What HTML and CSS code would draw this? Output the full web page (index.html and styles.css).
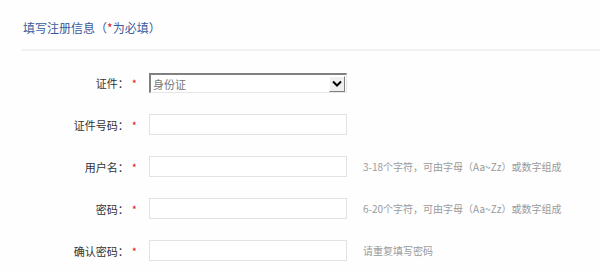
FILE: index.html
```html
<!DOCTYPE html>
<html lang="zh-CN">
<head>
<meta charset="utf-8">
<title>填写注册信息</title>
<link rel="stylesheet" href="styles.css">
</head>
<body>
<div class="header">
  <h2 class="title">填写注册信息（<span class="req">*</span>为必填）</h2>
</div>
<form class="form">
  <div class="row">
    <label class="label">证件：<span class="req">*</span></label>
    <div class="select">
      <span class="select-text">身份证</span>
      <span class="select-btn">
        <svg width="10" height="7" viewBox="0 0 10 7"><path d="M1 1.5 L5 5.5 L9 1.5" fill="none" stroke="#000" stroke-width="2"/></svg>
      </span>
    </div>
  </div>
  <div class="row">
    <label class="label">证件号码：<span class="req">*</span></label>
    <input class="input" type="text">
  </div>
  <div class="row">
    <label class="label">用户名：<span class="req">*</span></label>
    <input class="input" type="text">
    <span class="hint">3-18个字符，可由字母（Aa~Zz）或数字组成</span>
  </div>
  <div class="row">
    <label class="label">密码：<span class="req">*</span></label>
    <input class="input" type="password">
    <span class="hint">6-20个字符，可由字母（Aa~Zz）或数字组成</span>
  </div>
  <div class="row">
    <label class="label">确认密码：<span class="req">*</span></label>
    <input class="input" type="password">
    <span class="hint">请重复填写密码</span>
  </div>
</form>
</body>
</html>
```
FILE: styles.css
```css
html, body {
  margin: 0;
  padding: 0;
  background: #fefefe;
}
body {
  font-family: "Noto Sans CJK SC", "Noto Sans", "Liberation Sans", sans-serif;
  color: #333;
}
.header {
  margin-left: 21px;
  padding: 20px 0 13px 2px;
  border-bottom: 2px solid #f2f2f2;
}
.title {
  margin: 0;
  font-size: 12px;
  line-height: 16px;
  font-weight: normal;
  color: #3a5a9c;
}
.req {
  color: #e0202a;
}
.form {
  display: flex;
  flex-direction: column;
  gap: 21px;
  padding-top: 22px;
}
.row {
  display: flex;
  align-items: center;
}
.label {
  width: 137px;
  text-align: right;
  font-size: 11px;
  line-height: 14px;
  color: #333;
}
.label .req {
  margin-left: 3px;
}
.select {
  margin-left: 12px;
  width: 198px;
  height: 20px;
  box-sizing: border-box;
  display: flex;
  align-items: center;
  border-top: 2px solid #808080;
  border-left: 2px solid #808080;
  border-right: 1px solid #e6e6e6;
  border-bottom: 1px solid #e6e6e6;
  background: #fff;
}
.select-text {
  flex: 1;
  padding-left: 2px;
  font-size: 11px;
  color: #777;
}
.select-btn {
  width: 16px;
  height: 16px;
  box-sizing: border-box;
  margin-right: 1px;
  display: flex;
  align-items: center;
  justify-content: center;
  background: #efefef;
  border-top: 1px solid #fff;
  border-left: 1px solid #fff;
  border-right: 1px solid #808080;
  border-bottom: 1px solid #808080;
}
.input {
  margin: 0 0 0 12px;
  width: 198px;
  height: 21px;
  box-sizing: border-box;
  border: 1px solid #e2e2e2;
  padding: 0 4px;
  background: #fff;
  font-size: 12px;
}
.hint {
  margin-left: 16px;
  font-size: 10px;
  color: #9a9a9a;
}
```
